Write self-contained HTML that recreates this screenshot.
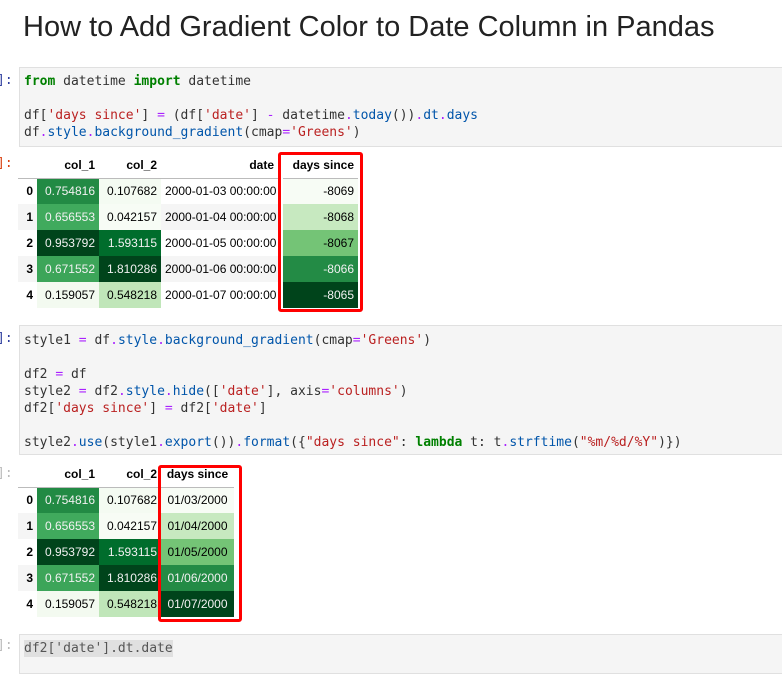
<!DOCTYPE html>
<html><head><meta charset="utf-8"><style>
body{margin:0;width:782px;height:646px;overflow:hidden;background:#fff;font-family:"Liberation Sans",sans-serif;color:#000;position:relative}
h1{position:absolute;left:23px;top:11px;margin:0;font-weight:400;font-size:29px;color:#222;white-space:nowrap}
.cell{position:absolute;left:19px;width:770px;background:#f5f5f5;border:1px solid #e0e0e0;box-sizing:border-box}
pre{margin:0;position:absolute;left:4px;font-family:"DejaVu Sans Mono",monospace;font-size:13px;line-height:17px;color:#333;white-space:pre}
.k{color:#008000;font-weight:bold}.s{color:#ba2121}.o{color:#aa22ff}.f{color:#0055aa}
.pin{position:absolute;left:-3px;font-family:"DejaVu Sans Mono",monospace;font-size:13px;color:#303f9f}
.pout{position:absolute;left:-3px;font-family:"DejaVu Sans Mono",monospace;font-size:13px;color:#d84315}
table{position:absolute;border-collapse:collapse;font-size:12px;table-layout:fixed}
td,th{height:26px;padding:0 4px;text-align:right;white-space:nowrap;overflow:hidden;box-sizing:border-box}
th{font-weight:bold;color:#000}
thead th{height:25px;border-bottom:1px solid #bbb;vertical-align:middle}
tbody tr:nth-child(even) th{background:#f5f5f5}
tbody tr:nth-child(even) td.p{background:#f5f5f5}
.w{color:#f1f1f1}
.red{position:absolute;border:3px solid #f00;border-radius:3px;box-sizing:border-box}
</style></head><body>
<h1>How to Add Gradient Color to Date Column in Pandas</h1>

<div class="pin" style="top:73px">]:</div>
<div class="cell" style="top:67px;height:80px"><pre style="top:5px"><span class="k">from</span> datetime <span class="k">import</span> datetime

df[<span class="s">'days since'</span>] <span class="o">=</span> (df[<span class="s">'date'</span>] <span class="o">-</span> datetime<span class="o">.</span><span class="f">today</span>())<span class="o">.</span><span class="f">dt</span><span class="o">.</span><span class="f">days</span>
df<span class="o">.</span><span class="f">style</span><span class="o">.</span><span class="f">background_gradient</span>(cmap<span class="o">=</span><span class="s">'Greens'</span>)</pre></div>

<div class="pout" style="top:156px">]:</div>
<table style="left:18px;top:153px;width:340px">
<colgroup><col style="width:19px"><col style="width:62px"><col style="width:62px"><col style="width:117px"><col style="width:5px"><col style="width:75px"></colgroup>
<thead><tr><th></th><th>col_1</th><th>col_2</th><th>date</th><th style="border:none"></th><th>days since</th></tr></thead>
<tbody>
<tr><th>0</th><td class="w" style="background:#228a44">0.754816</td><td style="background:#f4fbf2">0.107682</td><td>2000-01-03 00:00:00</td><td></td><td style="background:#f7fcf5">-8069</td></tr>
<tr><th>1</th><td class="w" style="background:#40aa5d">0.656553</td><td style="background:#f7fcf5">0.042157</td><td class="p">2000-01-04 00:00:00</td><td></td><td style="background:#c7e9c0">-8068</td></tr>
<tr><th>2</th><td class="w" style="background:#00441b">0.953792</td><td class="w" style="background:#006d2c">1.593115</td><td>2000-01-05 00:00:00</td><td></td><td style="background:#74c476">-8067</td></tr>
<tr><th>3</th><td class="w" style="background:#3ca559">0.671552</td><td class="w" style="background:#00441b">1.810286</td><td class="p">2000-01-06 00:00:00</td><td></td><td class="w" style="background:#238b45">-8066</td></tr>
<tr><th>4</th><td style="background:#f3faf0">0.159057</td><td style="background:#c0e6b9">0.548218</td><td>2000-01-07 00:00:00</td><td></td><td class="w" style="background:#00441b">-8065</td></tr>
</tbody></table>
<div class="red" style="left:278px;top:152px;width:85px;height:160px"></div>

<div class="pin" style="top:331px">]:</div>
<div class="cell" style="top:325px;height:130px"><pre style="top:6px">style1 <span class="o">=</span> df<span class="o">.</span><span class="f">style</span><span class="o">.</span><span class="f">background_gradient</span>(cmap<span class="o">=</span><span class="s">'Greens'</span>)

df2 <span class="o">=</span> df
style2 <span class="o">=</span> df2<span class="o">.</span><span class="f">style</span><span class="o">.</span><span class="f">hide</span>([<span class="s">'date'</span>], axis<span class="o">=</span><span class="s">'columns'</span>)
df2[<span class="s">'days since'</span>] <span class="o">=</span> df2[<span class="s">'date'</span>]

style2<span class="o">.</span><span class="f">use</span>(style1<span class="o">.</span><span class="f">export</span>())<span class="o">.</span><span class="f">format</span>({<span class="s">"days since"</span>: <span class="k">lambda</span> t: t<span class="o">.</span><span class="f">strftime</span>(<span class="s">"%m/%d/%Y"</span>)})</pre></div>

<div class="pout" style="top:466px;color:#bbb">]:</div>
<table style="left:18px;top:462px;width:216px">
<colgroup><col style="width:19px"><col style="width:62px"><col style="width:62px"><col style="width:73px"></colgroup>
<thead><tr><th></th><th>col_1</th><th>col_2</th><th style="text-align:center">days since</th></tr></thead>
<tbody>
<tr><th>0</th><td class="w" style="background:#228a44">0.754816</td><td style="background:#f4fbf2">0.107682</td><td style="background:#f7fcf5;text-align:center">01/03/2000</td></tr>
<tr><th>1</th><td class="w" style="background:#40aa5d">0.656553</td><td style="background:#f7fcf5">0.042157</td><td style="background:#c7e9c0;text-align:center">01/04/2000</td></tr>
<tr><th>2</th><td class="w" style="background:#00441b">0.953792</td><td class="w" style="background:#006d2c">1.593115</td><td style="background:#74c476;text-align:center">01/05/2000</td></tr>
<tr><th>3</th><td class="w" style="background:#3ca559">0.671552</td><td class="w" style="background:#00441b">1.810286</td><td class="w" style="background:#238b45;text-align:center">01/06/2000</td></tr>
<tr><th>4</th><td style="background:#f3faf0">0.159057</td><td style="background:#c0e6b9">0.548218</td><td class="w" style="background:#00441b;text-align:center">01/07/2000</td></tr>
</tbody></table>
<div class="red" style="left:158px;top:465px;width:84px;height:157px"></div>

<div class="pin" style="top:638px;color:#bbb">]:</div>
<div class="cell" style="top:634px;height:40px"><pre style="top:5px;background:#e0e0e0;color:#555">df2['date'].dt.date</pre></div>
</body></html>
